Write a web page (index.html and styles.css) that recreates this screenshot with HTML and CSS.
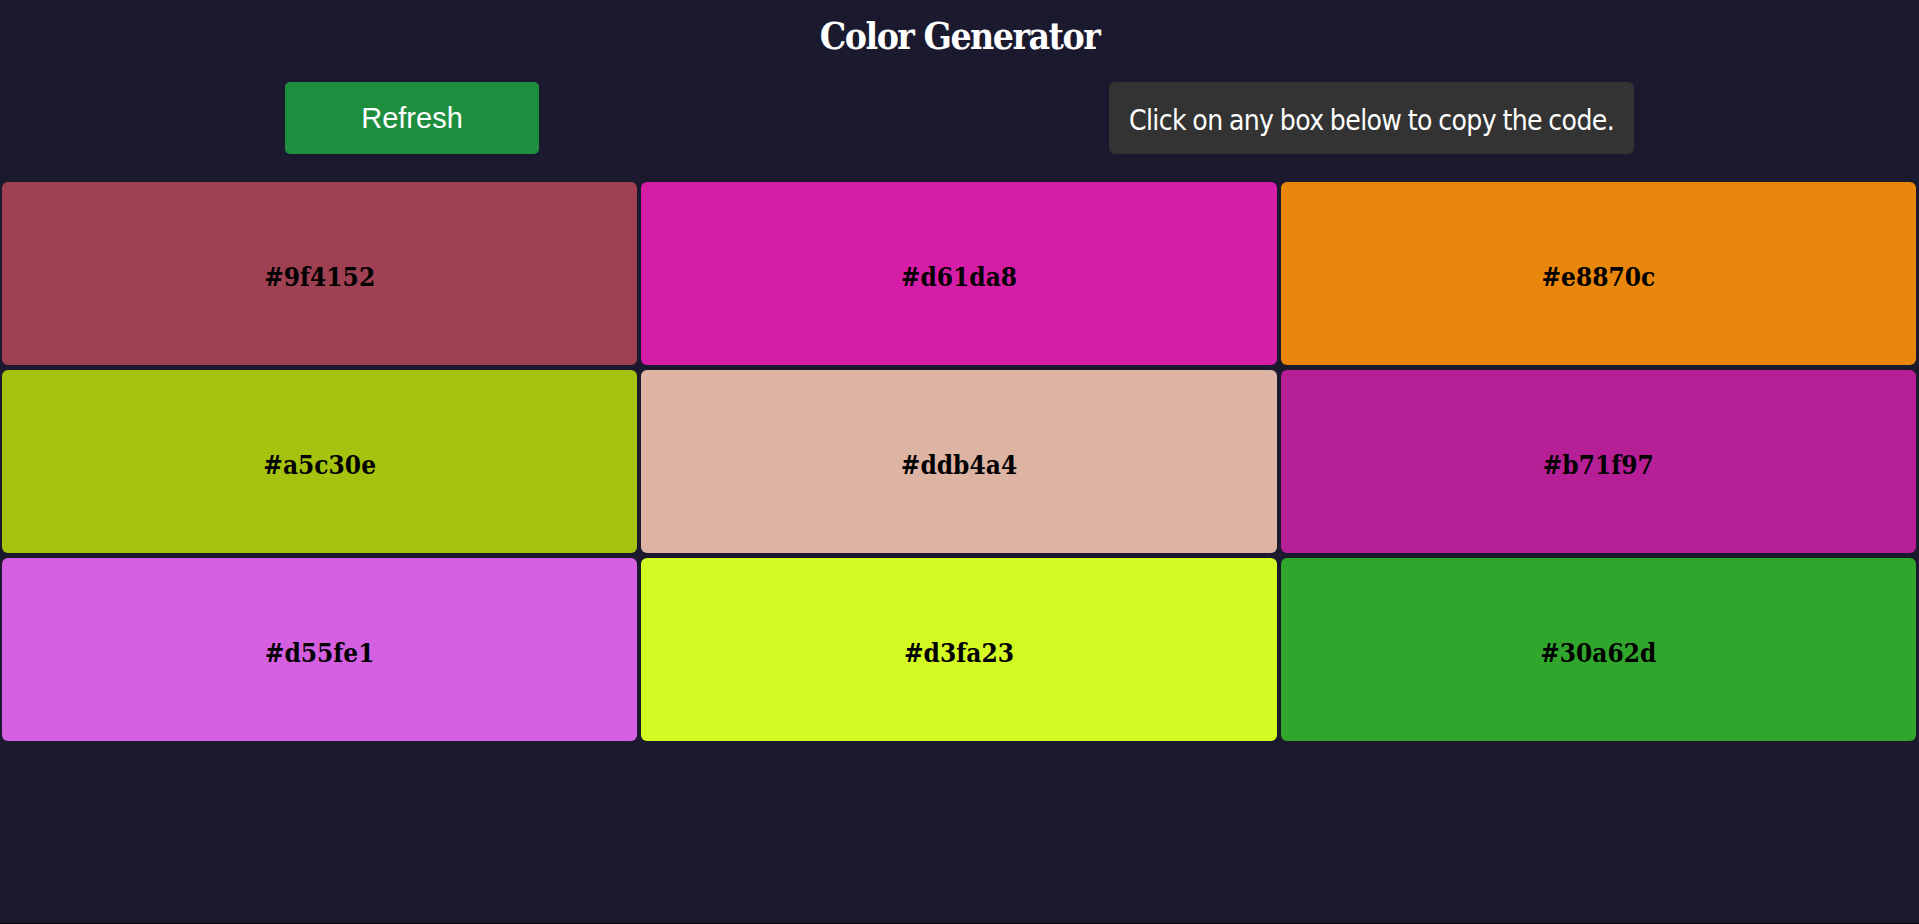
FILE: index.html
```html
<!DOCTYPE html>
<html lang="en">
<head>
<meta charset="utf-8">
<title>Color Generator</title>
<link rel="stylesheet" href="styles.css">
</head>
<body>
<h1 class="title">Color Generator</h1>
<div class="controls">
  <button class="refresh">Refresh</button>
  <div class="hint">Click on any box below to copy the code.</div>
</div>
<div class="grid">
  <div class="box" style="background:#9f4152">#9f4152</div>
  <div class="box" style="background:#d61da8">#d61da8</div>
  <div class="box" style="background:#e8870c">#e8870c</div>
  <div class="box" style="background:#a5c30e">#a5c30e</div>
  <div class="box" style="background:#ddb4a4">#ddb4a4</div>
  <div class="box" style="background:#b71f97">#b71f97</div>
  <div class="box" style="background:#d55fe1">#d55fe1</div>
  <div class="box" style="background:#d3fa23">#d3fa23</div>
  <div class="box" style="background:#30a62d">#30a62d</div>
</div>
</body>
</html>
```
FILE: styles.css
```css
html {
  background: #06060c;
}
body {
  margin: 0;
  height: 923px;
  background: #1a192e;
  color: #fff;
}
.title {
  margin: 0;
  padding-top: 16px;
  height: 46px;
  text-align: center;
  font-family: "DejaVu Serif", serif;
  font-stretch: condensed;
  font-weight: bold;
  font-size: 37px;
  line-height: 40px;
  letter-spacing: -1.5px;
}
.controls {
  display: flex;
  justify-content: space-around;
  align-items: center;
  padding: 20px 0 28px;
}
.refresh {
  width: 254px;
  height: 72px;
  border: none;
  border-radius: 5px;
  background: #1e8e3e;
  color: #fff;
  font-family: "Liberation Sans", Arial, sans-serif;
  font-size: 29px;
  cursor: pointer;
}
.hint {
  width: 525px;
  height: 72px;
  box-sizing: border-box;
  display: flex;
  align-items: center;
  justify-content: center;
  border-radius: 6px;
  background: #333333;
  font-family: "DejaVu Sans", sans-serif;
  font-stretch: condensed;
  font-size: 28px;
  letter-spacing: -0.6px;
  word-spacing: -1px;
  white-space: nowrap;
  padding-top: 4px;
}
.grid {
  display: grid;
  grid-template-columns: repeat(3, 1fr);
  grid-auto-rows: 183px;
  column-gap: 4px;
  row-gap: 5px;
  padding: 0 3px 0 2px;
}
.box {
  border-radius: 6px;
  display: flex;
  align-items: center;
  justify-content: center;
  padding-top: 6px;
  box-sizing: border-box;
  color: #000;
  font-family: "DejaVu Serif", serif;
  font-stretch: condensed;
  font-weight: bold;
  font-size: 26px;
  cursor: pointer;
}
```
